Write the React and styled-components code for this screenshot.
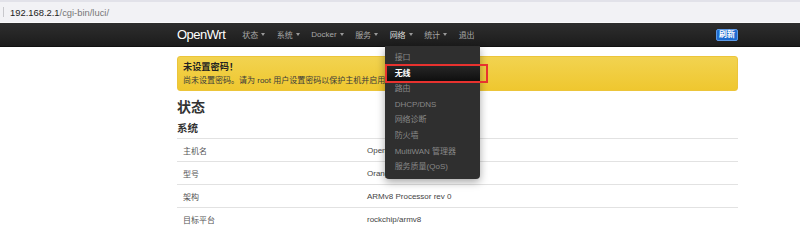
import React from "react";
import styled, { createGlobalStyle } from "styled-components";

const GlobalStyle = createGlobalStyle`
  html, body {
    margin: 0;
    padding: 0;
    background: #fff;
    font-family: "Liberation Sans", "Noto Sans CJK SC", sans-serif;
    overflow: hidden;
  }
`;

const Page = styled.div`
  width: 800px;
  height: 225px;
  display: flex;
  flex-direction: column;
  overflow: hidden;

  & > * {
    flex-shrink: 0;
  }
`;

const AddressBar = styled.div`
  height: 20px;
  display: flex;
  align-items: center;
  gap: 6px;
  padding-left: 3px;
  background: #f2f2f5;
  border-top: 2px solid #e2e2e9;
  border-bottom: 1px solid #fafafa;
  font-size: 9.4px;
  color: #777;
`;

const Caret = styled.span`
  width: 1px;
  height: 10px;
  background: #c8c8cc;
`;

const Host = styled.span`
  color: #222;
`;

const NavBar = styled.nav`
  height: 23px;
  background: linear-gradient(#2e2e2e, #1c1c1c);
  border-bottom: 1px solid #111;
`;

const Container = styled.div`
  margin-left: 177px;
  width: 561px;
`;

const NavInner = styled(Container)`
  height: 100%;
  display: flex;
  align-items: center;
`;

const Brand = styled.div`
  font-size: 13px;
  letter-spacing: -0.5px;
  color: #fff;
  margin-right: 17px;
`;

const Menu = styled.ul`
  list-style: none;
  margin: 0;
  padding: 0;
  display: flex;
  align-items: center;
  gap: 11.5px;
  height: 100%;
`;

const MenuItem = styled.li`
  position: relative;
  display: flex;
  align-items: center;
  height: 100%;
  font-size: 8px;
  color: ${(p) => (p.$open ? "#ddd" : "#a8a8a8")};
`;

const DownArrow = styled.span`
  margin-left: 3px;
  width: 0;
  height: 0;
  border-left: 2.5px solid transparent;
  border-right: 2.5px solid transparent;
  border-top: 3px solid #999;
`;

const RefreshBadge = styled.span`
  margin-left: auto;
  padding: 1px 2px;
  font-size: 8px;
  font-weight: bold;
  color: #fff;
  background: #1f6cd1;
  border: 1px solid #5b98e6;
  border-radius: 2px;
  line-height: 8px;
`;

const Dropdown = styled.ul`
  position: absolute;
  top: 100%;
  left: -5px;
  width: 95px;
  margin: 0;
  padding: 4px 0;
  list-style: none;
  background: #2f2f2f;
  border-radius: 0 0 4px 4px;
  box-shadow: 0 3px 8px rgba(0, 0, 0, 0.35);
  z-index: 5;
`;

const DropItem = styled.li`
  position: relative;
  height: 15.6px;
  line-height: 15.6px;
  padding-left: 10px;
  font-size: 8px;
  white-space: nowrap;
  color: ${(p) => (p.$active ? "#fff" : "#888")};
  font-weight: ${(p) => (p.$active ? "bold" : "normal")};
  background: ${(p) => (p.$active ? "linear-gradient(#262626, #0f0f0f)" : "transparent")};
`;

const Annotation = styled.span`
  position: absolute;
  top: -2px;
  left: 0;
  width: 99px;
  height: 15px;
  border: 2px solid #e8322f;
`;

const Main = styled(Container)`
  display: flex;
  flex-direction: column;
  color: #333;
`;

const Alert = styled.div`
  margin-top: 9px;
  padding: 4px 5px 3px;
  background: linear-gradient(#f2d350, #efc72f);
  border: 1px solid #ecc53a;
  border-radius: 3px;
  display: flex;
  flex-direction: column;
`;

const AlertTitle = styled.div`
  font-size: 9.2px;
  font-weight: bold;
  line-height: 13px;
  color: #222;
`;

const AlertText = styled.div`
  margin-top: 1px;
  font-size: 8px;
  line-height: 12px;
  color: #3a3a3a;
`;

const Heading = styled.h2`
  margin: 8px 0 0;
  font-size: 14px;
  line-height: 16px;
  font-weight: bold;
  color: #333;
`;

const SubHeading = styled.h3`
  margin: 6px 0 0;
  font-size: 10.5px;
  line-height: 14px;
  font-weight: bold;
  color: #333;
`;

const Table = styled.div`
  margin-top: 3px;
  display: flex;
  flex-direction: column;
`;

const Row = styled.div`
  display: grid;
  grid-template-columns: 184px 1fr;
  height: 22px;
  align-items: center;
  border-top: 1px solid #e2e2e2;
  font-size: 8px;
`;

const Label = styled.span`
  padding-left: 6px;
  color: #555;
`;

const Value = styled.span`
  padding-left: 6px;
  color: #444;
`;

const menu = [
  { name: "状态", drop: true },
  { name: "系统", drop: true },
  { name: "Docker", drop: true },
  { name: "服务", drop: true },
  { name: "网络", drop: true, open: true },
  { name: "统计", drop: true },
  { name: "退出" },
];

const networkItems = [
  "接口",
  "无线",
  "路由",
  "DHCP/DNS",
  "网络诊断",
  "防火墙",
  "MultiWAN 管理器",
  "服务质量(QoS)",
];

const rows = [
  ["主机名", "OpenWrt"],
  ["型号", "Orange Pi R1 Plus"],
  ["架构", "ARMv8 Processor rev 0"],
  ["目标平台", "rockchip/armv8"],
];

export default function App() {
  return (
    <Page>
      <GlobalStyle />
      <AddressBar>
        <Caret />
        <span>
          <Host>192.168.2.1</Host>/cgi-bin/luci/
        </span>
      </AddressBar>
      <NavBar>
        <NavInner>
          <Brand>OpenWrt</Brand>
          <Menu>
            {menu.map((m) => (
              <MenuItem key={m.name} $open={m.open}>
                {m.name}
                {m.drop && <DownArrow />}
                {m.open && (
                  <Dropdown>
                    {networkItems.map((item) => (
                      <DropItem key={item} $active={item === "无线"}>
                        {item}
                        {item === "无线" && <Annotation />}
                      </DropItem>
                    ))}
                  </Dropdown>
                )}
              </MenuItem>
            ))}
          </Menu>
          <RefreshBadge>刷新</RefreshBadge>
        </NavInner>
      </NavBar>
      <Main>
        <Alert>
          <AlertTitle>未设置密码！</AlertTitle>
          <AlertText>尚未设置密码。请为 root 用户设置密码以保护主机并启用。</AlertText>
        </Alert>
        <Heading>状态</Heading>
        <SubHeading>系统</SubHeading>
        <Table>
          {rows.map(([k, v]) => (
            <Row key={k}>
              <Label>{k}</Label>
              <Value>{v}</Value>
            </Row>
          ))}
        </Table>
      </Main>
    </Page>
  );
}
